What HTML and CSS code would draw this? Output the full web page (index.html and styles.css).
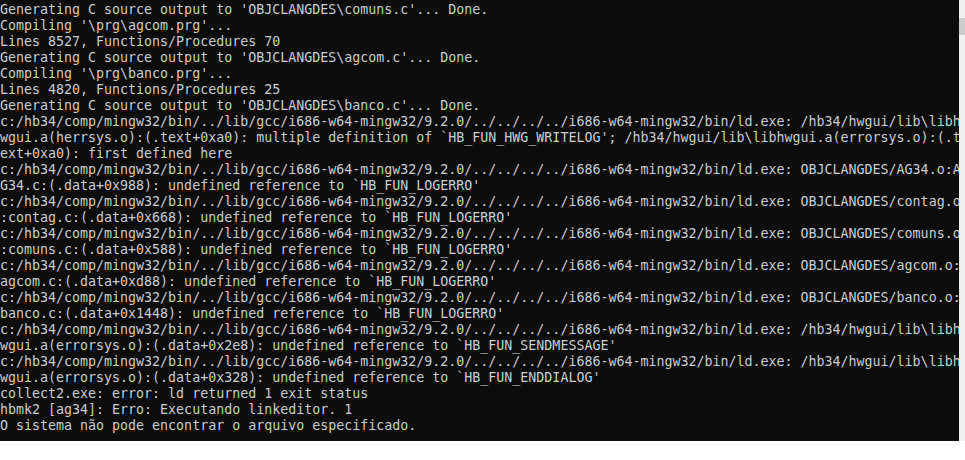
FILE: index.html
```html
<!DOCTYPE html>
<html lang="pt">
<head>
<meta charset="utf-8">
<title>Console</title>
<link rel="stylesheet" href="styles.css">
</head>
<body>
<div class="window">
<pre class="output">Generating C source output to 'OBJCLANGDES\comuns.c'... Done.
Compiling '\prg\agcom.prg'...
Lines 8527, Functions/Procedures 70
Generating C source output to 'OBJCLANGDES\agcom.c'... Done.
Compiling '\prg\banco.prg'...
Lines 4820, Functions/Procedures 25
Generating C source output to 'OBJCLANGDES\banco.c'... Done.
c:/hb34/comp/mingw32/bin/../lib/gcc/i686-w64-mingw32/9.2.0/../../../../i686-w64-mingw32/bin/ld.exe: /hb34/hwgui/lib\libh
wgui.a(herrsys.o):(.text+0xa0): multiple definition of `HB_FUN_HWG_WRITELOG'; /hb34/hwgui/lib\libhwgui.a(errorsys.o):(.t
ext+0xa0): first defined here
c:/hb34/comp/mingw32/bin/../lib/gcc/i686-w64-mingw32/9.2.0/../../../../i686-w64-mingw32/bin/ld.exe: OBJCLANGDES/AG34.o:A
G34.c:(.data+0x988): undefined reference to `HB_FUN_LOGERRO'
c:/hb34/comp/mingw32/bin/../lib/gcc/i686-w64-mingw32/9.2.0/../../../../i686-w64-mingw32/bin/ld.exe: OBJCLANGDES/contag.o
:contag.c:(.data+0x668): undefined reference to `HB_FUN_LOGERRO'
c:/hb34/comp/mingw32/bin/../lib/gcc/i686-w64-mingw32/9.2.0/../../../../i686-w64-mingw32/bin/ld.exe: OBJCLANGDES/comuns.o
:comuns.c:(.data+0x588): undefined reference to `HB_FUN_LOGERRO'
c:/hb34/comp/mingw32/bin/../lib/gcc/i686-w64-mingw32/9.2.0/../../../../i686-w64-mingw32/bin/ld.exe: OBJCLANGDES/agcom.o:
agcom.c:(.data+0xd88): undefined reference to `HB_FUN_LOGERRO'
c:/hb34/comp/mingw32/bin/../lib/gcc/i686-w64-mingw32/9.2.0/../../../../i686-w64-mingw32/bin/ld.exe: OBJCLANGDES/banco.o:
banco.c:(.data+0x1448): undefined reference to `HB_FUN_LOGERRO'
c:/hb34/comp/mingw32/bin/../lib/gcc/i686-w64-mingw32/9.2.0/../../../../i686-w64-mingw32/bin/ld.exe: /hb34/hwgui/lib\libh
wgui.a(errorsys.o):(.data+0x2e8): undefined reference to `HB_FUN_SENDMESSAGE'
c:/hb34/comp/mingw32/bin/../lib/gcc/i686-w64-mingw32/9.2.0/../../../../i686-w64-mingw32/bin/ld.exe: /hb34/hwgui/lib\libh
wgui.a(errorsys.o):(.data+0x328): undefined reference to `HB_FUN_ENDDIALOG'
collect2.exe: error: ld returned 1 exit status
hbmk2 [ag34]: Erro: Executando linkeditor. 1
O sistema não pode encontrar o arquivo especificado.</pre>
<div class="scrollbar"><div class="thumb"></div></div>
</div>
</body>
</html>
```
FILE: styles.css
```css
html, body {
  margin: 0;
  padding: 0;
  background: #ffffff;
}
.window {
  display: flex;
  width: 965px;
  height: 441px;
}
.output {
  flex: 1;
  margin: 0;
  padding: 2px 0 0 0;
  background: #0c0c0c;
  color: #cccccc;
  font-family: "DejaVu Sans Mono", "Liberation Mono", monospace;
  font-size: 13.3px;
  line-height: 16px;
  white-space: pre;
  overflow: hidden;
}
.scrollbar {
  width: 6px;
  background: #f0f0f0;
  display: flex;
  flex-direction: column;
}
.thumb {
  margin-top: 18px;
  height: 17px;
  background: #cdcdcd;
}
```
